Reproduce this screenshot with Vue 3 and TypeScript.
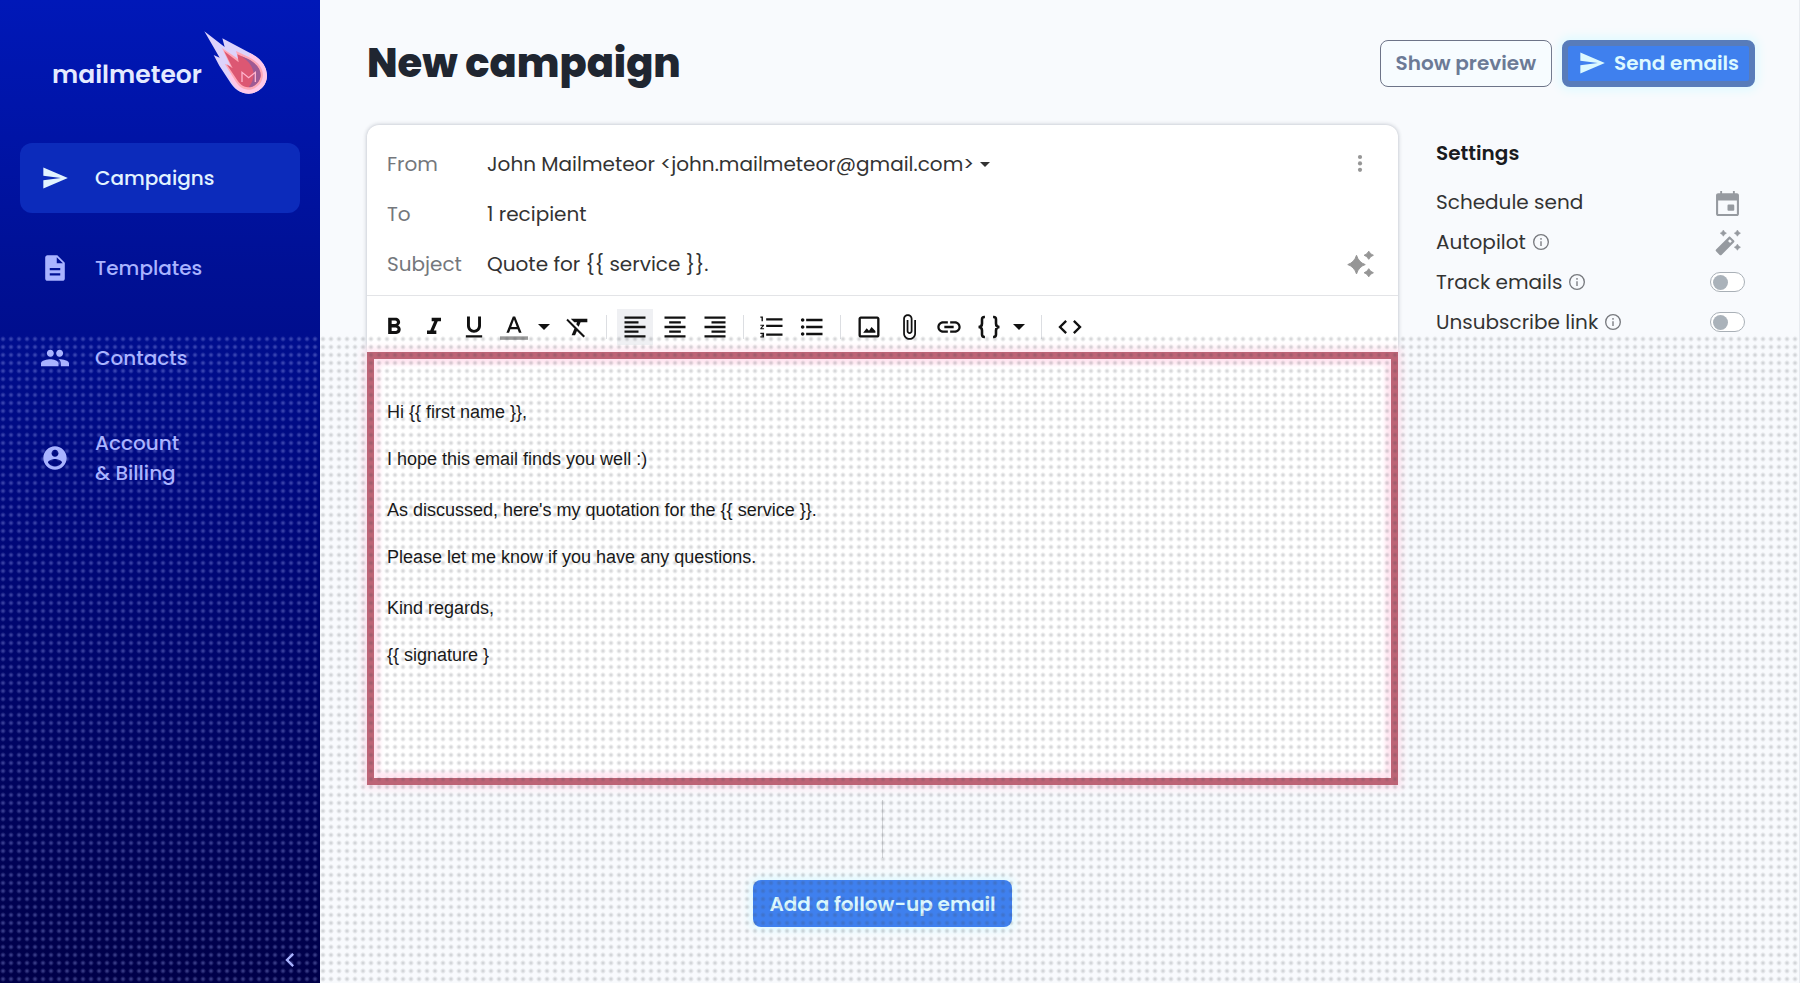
<script setup lang="ts">
import { ref } from 'vue'

interface NavItem {
  lines: string[]
  icon: string
  active?: boolean
}

interface Tool {
  label: string
  path?: string
  stroke?: string
  bar?: boolean
  active?: boolean
  menu?: boolean
}

const sendIcon = 'M2.01 21L23 12 2.01 3 2 10l15 2-15 2z'

const nav: NavItem[] = [
  { lines: ['Campaigns'], icon: sendIcon, active: true },
  {
    lines: ['Templates'],
    icon: 'M14 1H5.500c-1 0-1.900.9-1.900 2v18c0 1.100.9 2 1.900 2h13c1 0 1.900-.9 1.900-2V7.500L14 1zm2.500 17.500h-9v-2h9v2zm0-4.500h-9v-2h9v2zM13.500 8V2.800L18.800 8h-5.300z',
  },
  {
    lines: ['Contacts'],
    icon: 'M16 11c1.660 0 2.990-1.340 2.990-3S17.660 5 16 5c-1.660 0-3 1.340-3 3s1.340 3 3 3zm-8 0c1.660 0 2.990-1.340 2.990-3S9.660 5 8 5C6.340 5 5 6.340 5 8s1.340 3 3 3zm0 2c-2.330 0-8 1.170-8 3.500V19h15v-2.500c0-2.330-4.670-3.500-7-3.500zm8 0c-.29 0-.62.02-.97.05 1.160.84 1.970 1.970 1.970 3.450V19h7v-2.500c0-2.330-5.670-3.500-8-3.500z',
  },
  {
    lines: ['Account', '& Billing'],
    icon: 'M12 2C6.480 2 2 6.480 2 12s4.480 10 10 10 10-4.480 10-10S17.520 2 12 2zm0 3c1.660 0 3 1.340 3 3s-1.340 3-3 3-3-1.340-3-3 1.340-3 3-3zm0 14.200c-2.500 0-4.710-1.280-6-3.220.03-1.990 4-3.080 6-3.080 1.990 0 5.970 1.090 6 3.080-1.290 1.940-3.500 3.220-6 3.220z',
  },
]

const toolGroups: Tool[][] = [
  [
    { label: 'Bold', path: 'M15.600 10.790c.97-.67 1.650-1.770 1.650-2.790 0-2.260-1.750-4-4-4H7v14h7.040c2.090 0 3.710-1.700 3.710-3.790 0-1.520-.86-2.820-2.150-3.420zM10 6.500h3c.83 0 1.500.67 1.500 1.500s-.67 1.500-1.500 1.500h-3v-3zm3.500 9H10v-3h3.500c.83 0 1.500.67 1.500 1.500s-.67 1.500-1.500 1.500z' },
    { label: 'Italic', path: 'M10 4v3h2.210l-3.420 8H6v3h8v-3h-2.210l3.420-8H18V4z' },
    { label: 'Underline', path: 'M12 17c3.310 0 6-2.690 6-6V3h-2.500v8c0 1.930-1.570 3.500-3.500 3.500S8.500 12.930 8.500 11V3H6v8c0 3.310 2.690 6 6 6zm-7 2v2h14v-2H5z' },
    { label: 'Text color', path: 'M11 3L5.500 17h2.250l1.120-3h6.250l1.120 3h2.250L13 3h-2zm-1.380 9L12 5.670 14.380 12H9.620z', bar: true, menu: true },
    { label: 'Clear formatting', path: 'M3.270 5L2 6.270l6.970 6.970L6.500 19h3l1.570-3.660L16.730 21 18 19.730 3.550 5.270 3.270 5zM6 5v.18L8.820 8h2.400l-.72 1.680 2.100 2.100L14.210 8H20V5H6z' },
  ],
  [
    { label: 'Align left', path: 'M15 15H3v2h12v-2zm0-8H3v2h12V7zM3 13h18v-2H3v2zm0 8h18v-2H3v2zM3 3v2h18V3H3z', active: true },
    { label: 'Align center', path: 'M7 15v2h10v-2H7zm-4 6h18v-2H3v2zm0-8h18v-2H3v2zm4-6v2h10V7H7zM3 3v2h18V3H3z' },
    { label: 'Align right', path: 'M3 21h18v-2H3v2zm6-4h12v-2H9v2zm-6-4h18v-2H3v2zm6-4h12V7H9v2zM3 3v2h18V3H3z' },
  ],
  [
    { label: 'Numbered list', path: 'M2 18h2v.5H3v1h1v.5H2v1h3.200v-4H2v1zm1-11h1.200V3H2v1h1v3zm-1 4h1.800L2 13.100v.9h3.200v-1H3.200L5.200 10.900V10H2v1zm5-6.500v2h14v-2H7zm0 15h14v-2H7v2zm0-7.500h14v-2H7v2z' },
    { label: 'Bulleted list', path: 'M4 10.500c-.83 0-1.500.67-1.500 1.500s.67 1.500 1.500 1.500 1.500-.67 1.500-1.500-.67-1.500-1.500-1.500zm0-6c-.83 0-1.500.67-1.500 1.500S3.170 7.500 4 7.500 5.500 6.830 5.500 6 4.830 4.500 4 4.500zm0 12c-.83 0-1.500.68-1.500 1.500s.68 1.500 1.500 1.500 1.500-.68 1.500-1.500-.67-1.500-1.500-1.500zM7 19h14v-2H7v2zm0-6h14v-2H7v2zm0-8v2h14V5H7z' },
  ],
  [
    { label: 'Insert image', path: 'M19 5v14H5V5h14m0-2H5c-1.100 0-2 .9-2 2v14c0 1.100.9 2 2 2h14c1.100 0 2-.9 2-2V5c0-1.100-.9-2-2-2zM14.200 12l-2.200 3.200L10 13 7 17h10.500v-1.500z' },
    { label: 'Attach file', path: 'M16.500 6v11.500c0 2.210-1.790 4-4 4s-4-1.790-4-4V5c0-1.380 1.120-2.500 2.500-2.500s2.500 1.120 2.500 2.500v10.500c0 .55-.45 1-1 1s-1-.45-1-1V6H10v9.500c0 1.380 1.120 2.500 2.500 2.500s2.500-1.120 2.500-2.500V5c0-2.210-1.790-4-4-4S7 2.790 7 5v12.500c0 3.040 2.460 5.500 5.500 5.500s5.500-2.460 5.500-5.500V6h-1.500z' },
    { label: 'Insert link', path: 'M3.900 12c0-1.710 1.390-3.100 3.100-3.100h4V7H7c-2.760 0-5 2.240-5 5s2.240 5 5 5h4v-1.900H7c-1.710 0-3.100-1.390-3.100-3.100zM8 13h8v-2H8v2zm9-6h-4v1.900h4c1.710 0 3.100 1.390 3.100 3.100s-1.390 3.100-3.100 3.100h-4V17h4c2.760 0 5-2.240 5-5s-2.240-5-5-5z' },
    { label: 'Insert variable', stroke: 'M8.500 3.500H8C6.500 3.500 6 4.200 6 5.500V9C6 10.800 5 12 3 12 5 12 6 13.200 6 15v3.500c0 1.300.5 2 2 2h.5M15.500 3.500h.5c1.500 0 2 .7 2 2V9c0 1.800 1 3 3 3-2 0-3 1.200-3 3v3.500c0 1.300-.5 2-2 2h-.5', menu: true },
  ],
  [
    { label: 'Edit HTML', path: 'M9.400 16.600L4.800 12l4.600-4.600L8 6l-6 6 6 6 1.400-1.400zm5.200 0l4.600-4.600-4.600-4.600L16 6l6 6-6 6-1.400-1.400z' },
  ],
]

const paragraphGroups: string[][] = [
  ['Hi {{ first name }},', 'I hope this email finds you well :)'],
  ["As discussed, here's my quotation for the {{ service }}.", 'Please let me know if you have any questions.'],
  ['Kind regards,', '{{ signature }'],
]

const subject = ref('Quote for {{ service }}.')
const sender = 'John Mailmeteor <john.mailmeteor@gmail.com>'
const trackEmails = ref(false)
const unsubscribeLink = ref(false)
</script>

<template>
  <div class="app">
    <aside class="sidebar">
      <a class="brand" href="#">
        <span class="brand-name">mailmeteor</span>
        <svg class="brand-mark" viewBox="72 34 192 192" aria-hidden="true">
          <path fill="#ddd3fb" d="M73 35L134 82 127 56 206 98C244 114 262 144 261 170 260 202 232 222 206 222 180 222 162 208 148 184L118 138 101 106 119 114Z" />
          <path fill="none" stroke="#ffc8e8" stroke-width="12" d="M150 166L164 190C174 207 190 216 206 216 234 214 255 194 255 167 254 142 236 120 208 106" />
          <path fill="#ffa9b8" d="M126 85L175 118 168 94 206 112C235 127 249 145 249 167 247 194 226 210 204 210 184 208 174 197 164 180L134 132 152 140Z" />
          <path fill="#dc5773" d="M132 94L176 128 172 104 204 118C230 132 242 148 242 167 241 188 222 203 204 203 188 202 178 192 170 179L140 134 158 146Z" />
          <path fill="#8e5c9d" opacity=".8" d="M184 110L204 118C230 132 242 148 242 167 241 188 222 203 206 203 226 178 232 142 184 110Z" />
          <path fill="none" stroke="#ffb3cc" stroke-width="4" d="M186 187V158L206 174 226 158V187" />
        </svg>
      </a>
      <nav class="nav">
        <a v-for="item in nav" :key="item.lines[0]" href="#" class="nav-item" :class="{ active: item.active }">
          <svg class="icon" viewBox="0 0 24 24" aria-hidden="true"><path :d="item.icon" /></svg>
          <span><span v-for="line in item.lines" :key="line" class="nav-line">{{ line }}</span></span>
        </a>
      </nav>
      <button class="collapse" type="button" aria-label="Collapse sidebar">
        <svg viewBox="0 0 24 24"><path d="M15.410 7.410L14 6l-6 6 6 6 1.410-1.410L10.830 12z" /></svg>
      </button>
    </aside>

    <main class="main">
      <header class="header">
        <h1>New campaign</h1>
        <div class="actions">
          <button class="btn outline" type="button">Show preview</button>
          <button class="btn primary send" type="button">
            <svg class="icon" viewBox="0 0 24 24" aria-hidden="true"><path :d="sendIcon" /></svg>
            Send emails
          </button>
        </div>
      </header>

      <div class="content">
        <div class="composer">
          <section class="card">
            <div class="fields">
              <div class="field">
                <label for="from">From</label>
                <span class="from">
                  <select id="from"><option>{{ sender }}</option></select>
                  <svg class="caret" viewBox="0 0 10 5" aria-hidden="true"><path d="M0 0h10L5 5z" /></svg>
                </span>
                <button class="field-action" type="button" aria-label="More options">
                  <svg class="icon" viewBox="0 0 24 24"><circle cx="12" cy="6" r="1.800" /><circle cx="12" cy="11.500" r="1.800" /><circle cx="12" cy="17" r="1.800" /></svg>
                </button>
              </div>
              <div class="field">
                <label for="to">To</label>
                <button id="to" class="to" type="button">1 recipient</button>
              </div>
              <div class="field">
                <label for="subject">Subject</label>
                <input id="subject" v-model="subject" type="text" />
                <button class="field-action" type="button" aria-label="Suggest a subject">
                  <svg class="icon" viewBox="0 0 24 24">
                    <path d="M9 4.500Q10.900 10.600 16.500 12.500 10.900 14.400 9 20.500 7.100 14.400 1.500 12.500 7.100 10.600 9 4.500zM19.500 1Q20.800 3.700 23.500 4.500 20.800 5.300 19.500 8 18.200 5.300 15.500 4.500 18.200 3.700 19.500 1zM19.500 16Q20.800 18.700 23.500 19.500 20.800 20.300 19.500 23 18.200 20.300 15.500 19.500 18.200 18.700 19.500 16z" stroke="currentColor" stroke-width=".8" stroke-linejoin="round" />
                  </svg>
                </button>
              </div>
            </div>
            <div class="toolbar" role="toolbar" aria-label="Formatting">
              <div v-for="(group, g) in toolGroups" :key="g" class="tool-group">
                <div v-for="tool in group" :key="tool.label" class="tool-cell">
                  <button type="button" class="tool" :class="{ active: tool.active }" :aria-label="tool.label">
                    <svg class="icon" viewBox="0 0 24 24">
                      <path v-if="tool.path" :d="tool.path" />
                      <path v-if="tool.stroke" :d="tool.stroke" fill="none" stroke="currentColor" stroke-width="2.200" />
                      <path v-if="tool.bar" d="M0 20h24v3H0z" fill="#9a9a9a" />
                    </svg>
                  </button>
                  <button v-if="tool.menu" type="button" class="tool-menu" :aria-label="tool.label + ' menu'">
                    <svg viewBox="0 0 12 6"><path d="M0 0h12L6 6z" /></svg>
                  </button>
                </div>
              </div>
            </div>
            <div class="editor" contenteditable="true" role="textbox" aria-multiline="true" aria-label="Message">
              <div v-for="(group, g) in paragraphGroups" :key="g" class="paragraphs">
                <p v-for="text in group" :key="text">{{ text }}</p>
              </div>
            </div>
          </section>
          <div class="connector"></div>
          <button class="btn primary follow-up" type="button">Add a follow-up email</button>
        </div>

        <aside class="settings">
          <h2>Settings</h2>
          <div class="setting">
            <span>Schedule send</span>
            <button class="setting-control" type="button" aria-label="Schedule send">
              <svg class="icon" viewBox="0 0 24 24"><path d="M21 3h-2V1h-1.800v2H6.800V1H5v2H3c-1.100 0-2 .9-2 2v18c0 1.100.9 2 2 2h18c1.100 0 2-.9 2-2V5c0-1.100-.9-2-2-2zm0 20H3V10h18v13z" /><rect x="12" y="14" width="6.500" height="6" rx="1" /></svg>
            </button>
          </div>
          <div class="setting">
            <span>Autopilot</span>
            <svg class="info" viewBox="0 0 24 24" aria-hidden="true"><circle cx="12" cy="12" r="11" /><path d="M12 11v7M12 6v2.500" /></svg>
            <button class="setting-control" type="button" aria-label="Autopilot">
              <svg class="icon" viewBox="0 0 24 24">
                <path fill-rule="evenodd" d="M14.800 6.600l3.500 3.500c.5.500.5 1.200 0 1.700L6.200 23.900c-.5.500-1.200.5-1.700 0L1 20.400c-.5-.5-.5-1.200 0-1.700L13.100 6.600c.5-.5 1.200-.5 1.700 0zM14.200 8.800l-1.700 1.700 2 2 1.700-1.700z" />
                <path d="M8 0Q8.900 2.100 11 3 8.900 3.900 8 6 7.100 3.900 5 3 7.100 2.100 8 0zM21.500 0Q22.400 2.100 24.500 3 22.400 3.900 21.500 6 20.600 3.900 18.500 3 20.600 2.100 21.500 0zM21.500 13.500Q22.400 15.600 24.500 16.500 22.400 17.400 21.500 19.500 20.600 17.400 18.500 16.500 20.600 15.600 21.500 13.500z" stroke="currentColor" stroke-width=".5" />
              </svg>
            </button>
          </div>
          <div class="setting">
            <label for="track">Track emails</label>
            <svg class="info" viewBox="0 0 24 24" aria-hidden="true"><circle cx="12" cy="12" r="11" /><path d="M12 11v7M12 6v2.500" /></svg>
            <input id="track" v-model="trackEmails" class="toggle" type="checkbox" />
          </div>
          <div class="setting">
            <label for="unsubscribe">Unsubscribe link</label>
            <svg class="info" viewBox="0 0 24 24" aria-hidden="true"><circle cx="12" cy="12" r="11" /><path d="M12 11v7M12 6v2.500" /></svg>
            <input id="unsubscribe" v-model="unsubscribeLink" class="toggle" type="checkbox" />
          </div>
        </aside>
      </div>
    </main>
  </div>
</template>

<style>
body {
  margin: 0;
}
</style>

<style scoped>
.app {
  display: flex;
  min-height: 100vh;
  font-family: Poppins, Inter, "Open Sans", sans-serif;
  font-size: 20px;
  line-height: 30px;
  color: #333;
  background: #f8fafd;
}

.app *,
.app *::after {
  box-sizing: border-box;
}

button,
input,
select {
  margin: 0;
  padding: 0;
  border: 0;
  background: none;
  color: inherit;
  font: inherit;
}

a {
  color: inherit;
  text-decoration: none;
}

svg {
  display: block;
  flex: none;
  fill: currentColor;
  overflow: visible;
}

.icon {
  width: 28px;
  height: 28px;
}

.sidebar {
  position: relative;
  display: flex;
  flex: 0 0 320px;
  flex-direction: column;
  padding: 31px 20px 9px;
  color: #a9b3ff;
  background: linear-gradient(#0018b8, #001094 28%, #00087c 52%, #000048);
}

.sidebar::after,
.main::after {
  position: absolute;
  inset: 336px 0 0;
  pointer-events: none;
  content: "";
  background-image: radial-gradient(circle at 3px 3px, var(--dot) 0, transparent 3px);
  background-size: 8px 8px;
}

.sidebar::after {
  --dot: rgba(170, 180, 255, 0.4);
}

.main::after {
  --dot: rgba(60, 64, 72, 0.26);
}

.brand {
  display: flex;
  gap: 2px;
  align-items: flex-start;
  padding-left: 32px;
  color: #e4eaff;
}

.brand-name {
  padding-top: 29px;
  font-size: 25px;
  font-weight: 600;
}

.brand-mark {
  width: 64px;
  height: 64px;
}

.nav {
  display: flex;
  flex-direction: column;
  gap: 20px;
  margin-top: 48px;
}

.nav-item {
  display: flex;
  gap: 26px;
  align-items: center;
  min-height: 70px;
  padding: 15px 21px;
  border-radius: 12px;
  font-weight: 500;
}

.nav-item.active {
  color: #e2f3ff;
  background: #0c2bbb;
}

.nav-line {
  display: block;
}

.collapse {
  align-self: flex-end;
  margin-top: auto;
  margin-right: -4px;
}

.collapse svg {
  width: 28px;
  height: 28px;
}

.main {
  position: relative;
  flex: 1;
  min-width: 0;
  padding: 39px 44px 40px 47px;
  border-right: 1px solid #e8ebf0;
}

.header {
  display: flex;
  align-items: center;
  justify-content: space-between;
}

h1 {
  margin: 0;
  font-size: 40px;
  font-weight: 800;
  line-height: 48px;
  color: #202631;
}

.actions {
  display: flex;
  gap: 10px;
}

.btn {
  display: flex;
  gap: 8px;
  align-items: center;
  justify-content: center;
  height: 47px;
  padding: 0 16px;
  border-radius: 8px;
  font-weight: 600;
  white-space: nowrap;
}

.btn.outline {
  border: 1px solid #6d7488;
  padding: 0 15px;
  color: #6c7a96;
  background: #f7fcff;
}

.btn.primary {
  color: #dcf9ff;
  background: #3f80ee;
  box-shadow: 0 0 8px 4px #e2faff;
}

.btn.send {
  border: 6px solid #587cba;
  padding: 0 10px;
}

.content {
  display: flex;
  gap: 38px;
  align-items: flex-start;
  margin-top: 38px;
}

.composer {
  display: flex;
  flex: 1;
  flex-direction: column;
  align-items: center;
  min-width: 0;
}

.card {
  width: 100%;
  border-radius: 12px 12px 0 0;
  background: #fff;
  box-shadow: 0 0 4px rgba(30, 40, 60, 0.3);
}

.fields {
  padding: 14px 24px 6px 20px;
  border-bottom: 1px solid #e3e4e7;
}

.field {
  display: flex;
  align-items: center;
  height: 50px;
}

.field label {
  flex: 0 0 100px;
  color: #74777c;
}

.field input {
  flex: 1;
  min-width: 0;
  outline: 0;
}

.from {
  display: flex;
  gap: 5px;
  align-items: center;
}

.from select {
  appearance: none;
}

.caret {
  width: 10px;
  height: 5px;
}

.field-action {
  margin-left: auto;
  color: #969696;
}

.toolbar {
  display: flex;
  align-items: center;
  height: 56px;
  padding: 6px 9px 0;
  color: #111;
}

.tool-group {
  display: flex;
  gap: 4px;
  align-items: center;
}

.tool-group + .tool-group::before {
  width: 1px;
  height: 24px;
  margin: 0 6px 0 10px;
  content: "";
  background: #dcdee2;
}

.tool-cell {
  display: flex;
}

.tool {
  display: grid;
  place-items: center;
  width: 36px;
  height: 36px;
}

.tool.active {
  background: #eff0f3;
}

.tool-menu {
  display: grid;
  place-items: center;
  width: 24px;
}

.tool-menu svg {
  width: 12px;
  height: 6px;
}

.editor {
  display: flex;
  flex-direction: column;
  gap: 28px;
  min-height: 433px;
  padding: 42px 13px;
  border: 7px solid #bd6476;
  outline: 0;
  font-family: "Liberation Sans", Arial, sans-serif;
  font-size: 18px;
  line-height: 23px;
  color: #181818;
  box-shadow: 0 0 8px 4px #ffe6f1, inset 0 0 4px 6px #ffe6f1;
}

.paragraphs {
  display: flex;
  flex-direction: column;
  gap: 24px;
}

.paragraphs p {
  margin: 0;
}

.connector {
  width: 1px;
  height: 58px;
  margin: 15px 0 22px;
  background: #d4d6da;
}

.settings {
  flex: 0 0 319px;
  padding: 13px 10px 0 0;
}

h2 {
  margin: 0 0 14px;
  font-size: 20px;
  font-weight: 600;
  line-height: 30px;
  color: #191b20;
}

.setting {
  display: flex;
  gap: 7px;
  align-items: center;
  height: 40px;
}

.info {
  width: 16px;
  height: 16px;
  fill: none;
  stroke: #77797e;
  stroke-width: 2;
}

.setting-control {
  display: grid;
  place-items: center;
  width: 35px;
  margin-left: auto;
  color: #969aa0;
}

.setting-control .icon {
  width: 25px;
  height: 25px;
}

.toggle {
  display: flex;
  align-items: center;
  width: 35px;
  height: 20px;
  margin-left: auto;
  padding: 0 2px;
  border: 1px solid #a9b0b7;
  border-radius: 10px;
  appearance: none;
  background: #fff;
}

.toggle::after {
  width: 15px;
  height: 15px;
  border-radius: 50%;
  content: "";
  background: #aab2ba;
}

.toggle:checked {
  justify-content: flex-end;
}
</style>
